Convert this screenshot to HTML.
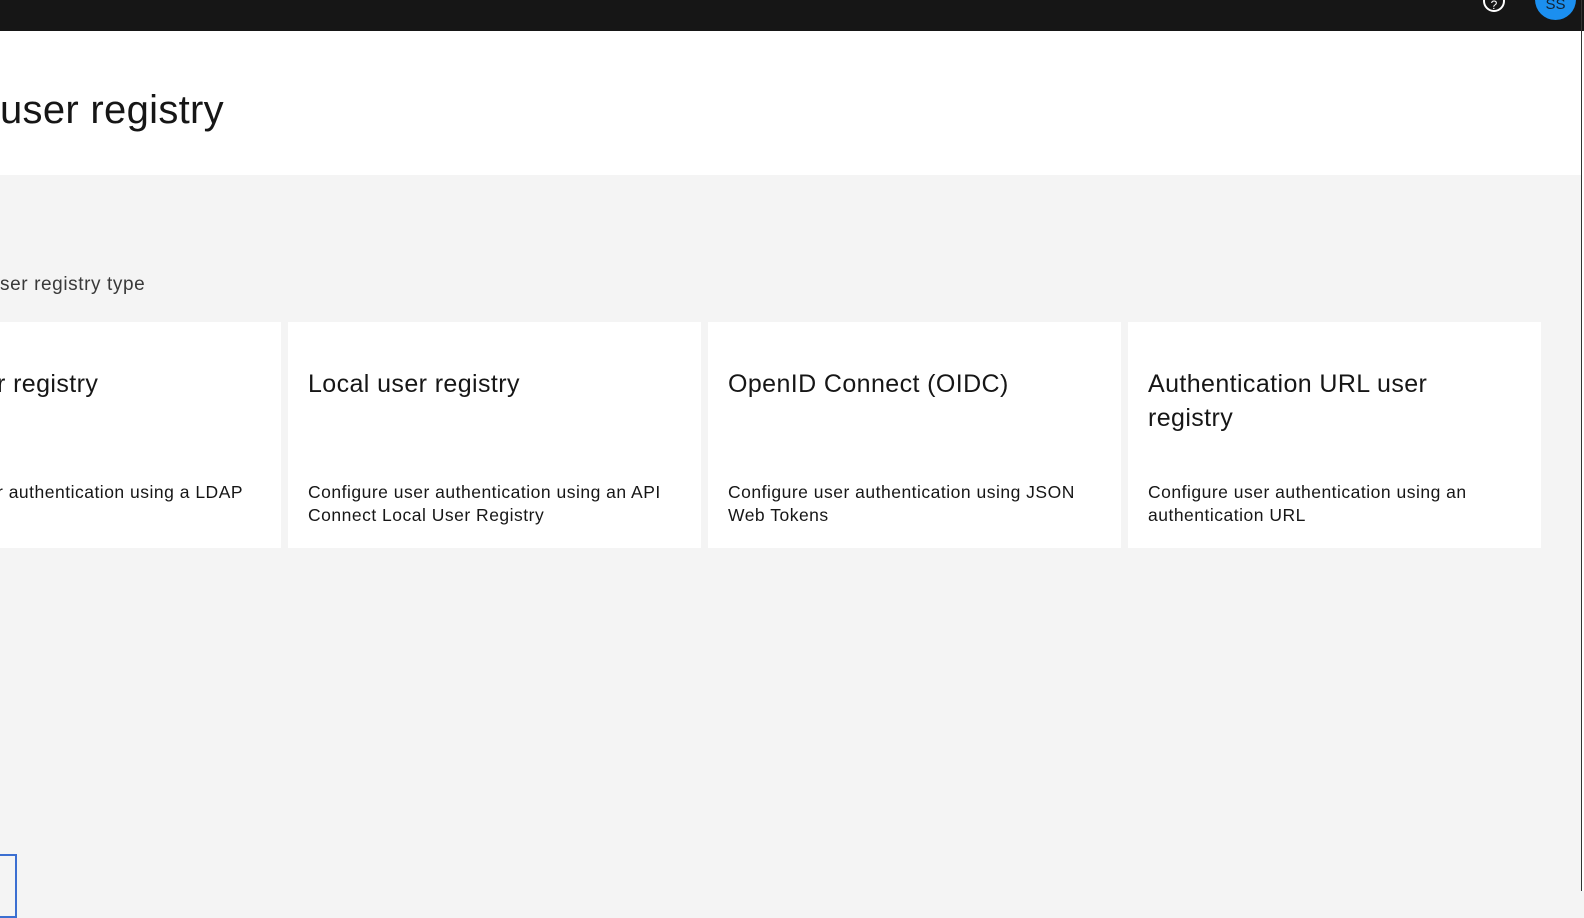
<!DOCTYPE html>
<html><head><style>
body{margin:0;width:1584px;height:891px;overflow:hidden;position:relative;background:#f4f4f4;font-family:"Liberation Sans",sans-serif;color:#161616}
.top{position:absolute;left:0;top:0;width:1584px;height:31px;background:#161616;overflow:hidden}
.hdr{position:absolute;left:0;top:31px;width:1581px;height:144px;background:#fff}
.vline{position:absolute;left:1581px;top:0;width:1px;height:891px;background:#333}
.rw{position:absolute;left:1582px;top:31px;width:2px;height:860px;background:#fff}
h1{position:absolute;left:0;top:88px;margin:0;font-size:40px;font-weight:400;letter-spacing:0.3px}
.lab{position:absolute;left:0;top:274px;font-size:19px;color:#393939;letter-spacing:0.6px}
.card{position:absolute;top:322px;height:226px;background:#fff;overflow:hidden}
.card .t{position:absolute;left:20px;top:45px;font-size:25px;line-height:34px;width:390px;letter-spacing:0.4px}
.card .d{position:absolute;left:20px;top:159px;font-size:17.5px;line-height:23px;width:380px;letter-spacing:0.5px}
.av{position:absolute;left:1535px;top:-21px;width:41px;height:41px;border-radius:50%;background:#1b8ff0;color:#123;font-size:15px;text-align:center;line-height:52px}
.help{position:absolute;left:1483px;top:-10px;width:18px;height:18px;border:2px solid #fff;border-radius:50%;color:#fff;font-size:12px;text-align:center;line-height:26px}
.btn{position:absolute;left:-2px;top:854px;width:15px;height:60px;border:2px solid #3b6fd1;background:#f4f4f4}
</style></head><body>
<div class="top"><div class="help">?</div><div class="av">SS</div></div>
<div class="hdr"></div>
<h1>user registry</h1>
<div class="lab">ser registry type</div>
<div class="card" style="left:0;width:281px"><div class="t" style="left:-3px">r registry</div><div class="d" style="left:-3px">r authentication using a LDAP</div></div>
<div class="card" style="left:288px;width:413px"><div class="t">Local user registry</div><div class="d">Configure user authentication using an API Connect Local User Registry</div></div>
<div class="card" style="left:708px;width:413px"><div class="t">OpenID Connect (OIDC)</div><div class="d">Configure user authentication using JSON Web Tokens</div></div>
<div class="card" style="left:1128px;width:413px"><div class="t" style="width:310px">Authentication URL user registry</div><div class="d" style="width:340px">Configure user authentication using an authentication URL</div></div>
<div class="btn"></div>
<div class="vline"></div><div class="rw"></div>
</body></html>
